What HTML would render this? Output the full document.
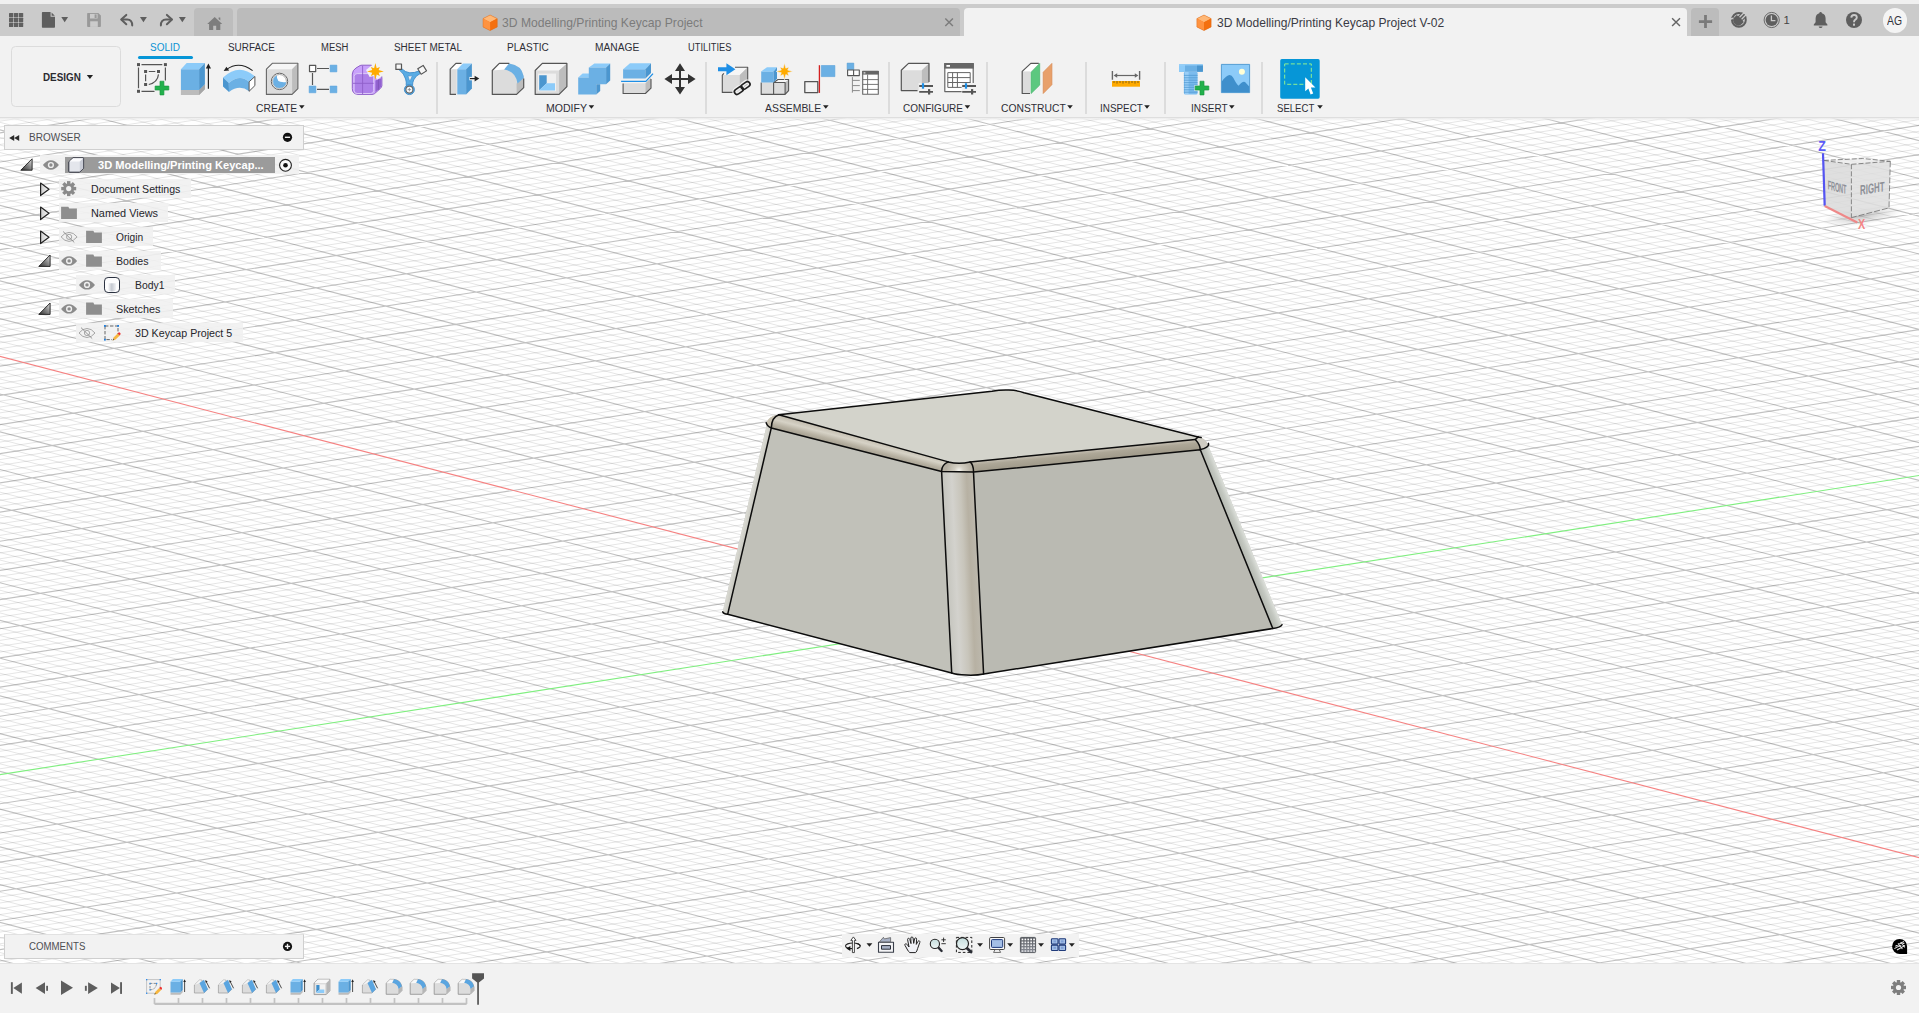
<!DOCTYPE html>
<html lang="en"><head><meta charset="utf-8"><title>Autodesk Fusion</title>
<style>
html,body{margin:0;padding:0}
body{width:1919px;height:1013px;overflow:hidden;position:relative;background:#f2f2f2;font-family:"Liberation Sans",sans-serif;}
#canvas{position:absolute;left:0;top:0}
.abs{position:absolute}
.t{position:absolute;white-space:nowrap;line-height:1;transform-origin:0 0;}
#topstrip{left:0;top:0;width:1919px;height:4px;background:#f0f0f0}
#tabbar{left:0;top:4px;width:1919px;height:32px;background:#cbcbcb}
#toolbar{left:0;top:36px;width:1919px;height:81px;background:#f2f2f2;border-bottom:1px solid #dedede}
.tab{position:absolute;top:8px;height:28px;border-radius:4px 4px 0 0}
#timeline{left:0;top:963px;width:1919px;height:50px;background:#f2f2f2;border-top:1px solid #e4e4e4;box-sizing:border-box}
#tbshadow{left:0;top:118px;width:1919px;height:3px;background:linear-gradient(#ececec,rgba(240,240,240,.0))}
.panel{position:absolute;background:#f2f2f2;border:1px solid #cfcfcf;box-sizing:border-box}
.rowbg{position:absolute;background:rgba(240,240,240,.88);height:20px}
.sep{position:absolute;top:62px;width:2px;height:52px;background:#dcdcdc}
#icons{position:absolute;left:0;top:0;pointer-events:none}

</style></head>
<body>
<svg id="canvas" width="1919" height="1013" viewBox="0 0 1919 1013">
<rect x="0" y="118" width="1919" height="845" fill="#fff"/>
<path d="M-2.0 121.5L33.4 116.0M-2.0 127.3L70.8 116.0M-2.0 139.0L145.6 116.0M-2.0 144.8L183.1 116.0M-2.0 150.7L220.5 116.0M-2.0 156.5L257.9 116.0M-2.0 168.2L332.8 116.0M-2.0 174.0L370.2 116.0M-2.0 179.9L407.6 116.0M-2.0 185.7L445.1 116.0M-2.0 197.4L519.9 116.0M-2.0 203.2L557.4 116.0M-2.0 209.0L594.8 116.0M-2.0 214.9L632.2 116.0M-2.0 226.5L707.1 116.0M-2.0 232.4L744.5 116.0M-2.0 238.2L781.9 116.0M-2.0 244.0L819.4 116.0M-2.0 255.7L894.2 116.0M-2.0 261.5L931.6 116.0M-2.0 267.4L969.1 116.0M-2.0 273.2L1006.5 116.0M-2.0 284.9L1081.4 116.0M-2.0 290.7L1118.8 116.0M-2.0 296.5L1156.2 116.0M-2.0 302.4L1193.6 116.0M-2.0 314.0L1268.5 116.0M-2.0 319.9L1305.9 116.0M-2.0 325.7L1343.4 116.0M-2.0 331.5L1380.8 116.0M-2.0 343.2L1455.6 116.0M-2.0 349.0L1493.1 116.0M-2.0 354.9L1530.5 116.0M-2.0 360.7L1567.9 116.0M-2.0 372.4L1642.8 116.0M-2.0 378.2L1680.2 116.0M-2.0 384.0L1717.6 116.0M-2.0 389.9L1755.1 116.0M-2.0 401.5L1829.9 116.0M-2.0 407.4L1867.4 116.0M-2.0 413.2L1904.8 116.0M-2.0 419.0L1921.0 119.3M-2.0 430.7L1921.0 131.0M-2.0 436.5L1921.0 136.8M-2.0 442.4L1921.0 142.6M-2.0 448.2L1921.0 148.5M-2.0 459.9L1921.0 160.1M-2.0 465.7L1921.0 166.0M-2.0 471.6L1921.0 171.8M-2.0 477.4L1921.0 177.6M-2.0 489.1L1921.0 189.3M-2.0 494.9L1921.0 195.1M-2.0 500.7L1921.0 201.0M-2.0 506.6L1921.0 206.8M-2.0 518.2L1921.0 218.5M-2.0 524.1L1921.0 224.3M-2.0 529.9L1921.0 230.2M-2.0 535.7L1921.0 236.0M-2.0 547.4L1921.0 247.7M-2.0 553.2L1921.0 253.5M-2.0 559.1L1921.0 259.3M-2.0 564.9L1921.0 265.2M-2.0 576.6L1921.0 276.8M-2.0 582.4L1921.0 282.7M-2.0 588.2L1921.0 288.5M-2.0 594.1L1921.0 294.3M-2.0 605.7L1921.0 306.0M-2.0 611.6L1921.0 311.8M-2.0 617.4L1921.0 317.7M-2.0 623.2L1921.0 323.5M-2.0 634.9L1921.0 335.2M-2.0 640.7L1921.0 341.0M-2.0 646.6L1921.0 346.8M-2.0 652.4L1921.0 352.7M-2.0 664.1L1921.0 364.3M-2.0 669.9L1921.0 370.2M-2.0 675.7L1921.0 376.0M-2.0 681.6L1921.0 381.8M-2.0 693.2L1921.0 393.5M-2.0 699.1L1921.0 399.3M-2.0 704.9L1921.0 405.2M-2.0 710.7L1921.0 411.0M-2.0 722.4L1921.0 422.7M-2.0 728.2L1921.0 428.5M-2.0 734.1L1921.0 434.3M-2.0 739.9L1921.0 440.2M-2.0 751.6L1921.0 451.8M-2.0 757.4L1921.0 457.7M-2.0 763.3L1921.0 463.5M-2.0 769.1L1921.0 469.3M-2.0 780.8L1921.0 481.0M-2.0 786.6L1921.0 486.8M-2.0 792.4L1921.0 492.7M-2.0 798.3L1921.0 498.5M-2.0 809.9L1921.0 510.2M-2.0 815.8L1921.0 516.0M-2.0 821.6L1921.0 521.9M-2.0 827.4L1921.0 527.7M-2.0 839.1L1921.0 539.4M-2.0 844.9L1921.0 545.2M-2.0 850.8L1921.0 551.0M-2.0 856.6L1921.0 556.9M-2.0 868.3L1921.0 568.5M-2.0 874.1L1921.0 574.4M-2.0 879.9L1921.0 580.2M-2.0 885.8L1921.0 586.0M-2.0 897.4L1921.0 597.7M-2.0 903.3L1921.0 603.5M-2.0 909.1L1921.0 609.4M-2.0 914.9L1921.0 615.2M-2.0 926.6L1921.0 626.9M-2.0 932.4L1921.0 632.7M-2.0 938.3L1921.0 638.5M-2.0 944.1L1921.0 644.4M-2.0 955.8L1921.0 656.0M-2.0 961.6L1921.0 661.9M13.7 965.0L1921.0 667.7M51.1 965.0L1921.0 673.5M125.9 965.0L1921.0 685.2M163.4 965.0L1921.0 691.0M200.8 965.0L1921.0 696.9M238.2 965.0L1921.0 702.7M313.1 965.0L1921.0 714.4M350.5 965.0L1921.0 720.2M387.9 965.0L1921.0 726.0M425.4 965.0L1921.0 731.9M500.2 965.0L1921.0 743.5M537.7 965.0L1921.0 749.4M575.1 965.0L1921.0 755.2M612.5 965.0L1921.0 761.0M687.4 965.0L1921.0 772.7M724.8 965.0L1921.0 778.5M762.2 965.0L1921.0 784.4M799.7 965.0L1921.0 790.2M874.5 965.0L1921.0 801.9M911.9 965.0L1921.0 807.7M949.4 965.0L1921.0 813.6M986.8 965.0L1921.0 819.4M1061.7 965.0L1921.0 831.1M1099.1 965.0L1921.0 836.9M1136.5 965.0L1921.0 842.7M1173.9 965.0L1921.0 848.6M1248.8 965.0L1921.0 860.2M1286.2 965.0L1921.0 866.1M1323.7 965.0L1921.0 871.9M1361.1 965.0L1921.0 877.7M1435.9 965.0L1921.0 889.4M1473.4 965.0L1921.0 895.2M1510.8 965.0L1921.0 901.1M1548.2 965.0L1921.0 906.9M1623.1 965.0L1921.0 918.6M1660.5 965.0L1921.0 924.4M1697.9 965.0L1921.0 930.2M1735.4 965.0L1921.0 936.1M1810.2 965.0L1921.0 947.7M1847.7 965.0L1921.0 953.6M1885.1 965.0L1921.0 959.4M-2.0 952.0L47.8 965.0M-2.0 944.4L76.7 965.0M-2.0 936.9L105.6 965.0M-2.0 929.3L134.5 965.0M-2.0 914.2L192.3 965.0M-2.0 906.7L221.2 965.0M-2.0 899.1L250.0 965.0M-2.0 891.6L278.9 965.0M-2.0 876.5L336.7 965.0M-2.0 869.0L365.6 965.0M-2.0 861.4L394.5 965.0M-2.0 853.9L423.4 965.0M-2.0 838.8L481.1 965.0M-2.0 831.2L510.0 965.0M-2.0 823.7L538.9 965.0M-2.0 816.1L567.8 965.0M-2.0 801.0L625.6 965.0M-2.0 793.5L654.4 965.0M-2.0 785.9L683.3 965.0M-2.0 778.4L712.2 965.0M-2.0 763.3L770.0 965.0M-2.0 755.8L798.9 965.0M-2.0 748.2L827.8 965.0M-2.0 740.7L856.6 965.0M-2.0 725.6L914.4 965.0M-2.0 718.0L943.3 965.0M-2.0 710.5L972.2 965.0M-2.0 702.9L1001.1 965.0M-2.0 687.8L1058.8 965.0M-2.0 680.3L1087.7 965.0M-2.0 672.7L1116.6 965.0M-2.0 665.2L1145.5 965.0M-2.0 650.1L1203.3 965.0M-2.0 642.6L1232.2 965.0M-2.0 635.0L1261.0 965.0M-2.0 627.5L1289.9 965.0M-2.0 612.4L1347.7 965.0M-2.0 604.8L1376.6 965.0M-2.0 597.3L1405.5 965.0M-2.0 589.7L1434.4 965.0M-2.0 574.6L1492.1 965.0M-2.0 567.1L1521.0 965.0M-2.0 559.5L1549.9 965.0M-2.0 552.0L1578.8 965.0M-2.0 536.9L1636.6 965.0M-2.0 529.4L1665.5 965.0M-2.0 521.8L1694.3 965.0M-2.0 514.3L1723.2 965.0M-2.0 499.2L1781.0 965.0M-2.0 491.6L1809.9 965.0M-2.0 484.1L1838.8 965.0M-2.0 476.5L1867.7 965.0M-2.0 461.4L1921.0 963.8M-2.0 453.9L1921.0 956.3M-2.0 446.3L1921.0 948.8M-2.0 438.8L1921.0 941.2M-2.0 423.7L1921.0 926.1M-2.0 416.2L1921.0 918.6M-2.0 408.6L1921.0 911.0M-2.0 401.1L1921.0 903.5M-2.0 386.0L1921.0 888.4M-2.0 378.4L1921.0 880.8M-2.0 370.9L1921.0 873.3M-2.0 363.3L1921.0 865.7M-2.0 348.2L1921.0 850.6M-2.0 340.7L1921.0 843.1M-2.0 333.1L1921.0 835.5M-2.0 325.6L1921.0 828.0M-2.0 310.5L1921.0 812.9M-2.0 303.0L1921.0 805.4M-2.0 295.4L1921.0 797.8M-2.0 287.9L1921.0 790.3M-2.0 272.8L1921.0 775.2M-2.0 265.2L1921.0 767.6M-2.0 257.7L1921.0 760.1M-2.0 250.1L1921.0 752.5M-2.0 235.0L1921.0 737.4M-2.0 227.5L1921.0 729.9M-2.0 219.9L1921.0 722.3M-2.0 212.4L1921.0 714.8M-2.0 197.3L1921.0 699.7M-2.0 189.8L1921.0 692.2M-2.0 182.2L1921.0 684.6M-2.0 174.7L1921.0 677.1M-2.0 159.6L1921.0 662.0M-2.0 152.0L1921.0 654.4M-2.0 144.5L1921.0 646.9M-2.0 136.9L1921.0 639.3M-2.0 121.8L1921.0 624.2M4.5 116.0L1921.0 616.7M33.4 116.0L1921.0 609.1M62.3 116.0L1921.0 601.6M120.1 116.0L1921.0 586.5M149.0 116.0L1921.0 579.0M177.9 116.0L1921.0 571.4M206.7 116.0L1921.0 563.9M264.5 116.0L1921.0 548.8M293.4 116.0L1921.0 541.2M322.3 116.0L1921.0 533.7M351.2 116.0L1921.0 526.1M408.9 116.0L1921.0 511.0M437.8 116.0L1921.0 503.5M466.7 116.0L1921.0 495.9M495.6 116.0L1921.0 488.4M553.4 116.0L1921.0 473.3M582.3 116.0L1921.0 465.8M611.2 116.0L1921.0 458.2M640.0 116.0L1921.0 450.7M697.8 116.0L1921.0 435.6M726.7 116.0L1921.0 428.0M755.6 116.0L1921.0 420.5M784.5 116.0L1921.0 412.9M842.2 116.0L1921.0 397.8M871.1 116.0L1921.0 390.3M900.0 116.0L1921.0 382.7M928.9 116.0L1921.0 375.2M986.7 116.0L1921.0 360.1M1015.6 116.0L1921.0 352.6M1044.4 116.0L1921.0 345.0M1073.3 116.0L1921.0 337.5M1131.1 116.0L1921.0 322.4M1160.0 116.0L1921.0 314.8M1188.9 116.0L1921.0 307.3M1217.8 116.0L1921.0 299.7M1275.5 116.0L1921.0 284.6M1304.4 116.0L1921.0 277.1M1333.3 116.0L1921.0 269.5M1362.2 116.0L1921.0 262.0M1420.0 116.0L1921.0 246.9M1448.8 116.0L1921.0 239.4M1477.7 116.0L1921.0 231.8M1506.6 116.0L1921.0 224.3M1564.4 116.0L1921.0 209.2M1593.3 116.0L1921.0 201.6M1622.2 116.0L1921.0 194.1M1651.0 116.0L1921.0 186.5M1708.8 116.0L1921.0 171.4M1737.7 116.0L1921.0 163.9M1766.6 116.0L1921.0 156.3M1795.5 116.0L1921.0 148.8M1853.2 116.0L1921.0 133.7M1882.1 116.0L1921.0 126.2M1911.0 116.0L1921.0 118.6" stroke="#000" stroke-opacity="0.1" stroke-width="1" fill="none"/><path d="M-2.0 133.2L108.2 116.0M-2.0 162.3L295.4 116.0M-2.0 191.5L482.5 116.0M-2.0 220.7L669.6 116.0M-2.0 249.9L856.8 116.0M-2.0 279.0L1043.9 116.0M-2.0 308.2L1231.1 116.0M-2.0 337.4L1418.2 116.0M-2.0 366.5L1605.4 116.0M-2.0 395.7L1792.5 116.0M-2.0 424.9L1921.0 125.1M-2.0 454.0L1921.0 154.3M-2.0 483.2L1921.0 183.5M-2.0 512.4L1921.0 212.7M-2.0 541.6L1921.0 241.8M-2.0 570.7L1921.0 271.0M-2.0 599.9L1921.0 300.2M-2.0 629.1L1921.0 329.3M-2.0 658.2L1921.0 358.5M-2.0 687.4L1921.0 387.7M-2.0 716.6L1921.0 416.8M-2.0 745.7L1921.0 446.0M-2.0 804.1L1921.0 504.4M-2.0 833.3L1921.0 533.5M-2.0 862.4L1921.0 562.7M-2.0 891.6L1921.0 591.9M-2.0 920.8L1921.0 621.0M-2.0 949.9L1921.0 650.2M88.5 965.0L1921.0 679.4M275.7 965.0L1921.0 708.5M462.8 965.0L1921.0 737.7M649.9 965.0L1921.0 766.9M837.1 965.0L1921.0 796.1M1024.2 965.0L1921.0 825.2M1211.4 965.0L1921.0 854.4M1398.5 965.0L1921.0 883.6M1585.7 965.0L1921.0 912.7M1772.8 965.0L1921.0 941.9M-2.0 959.5L19.0 965.0M-2.0 921.8L163.4 965.0M-2.0 884.1L307.8 965.0M-2.0 846.3L452.2 965.0M-2.0 808.6L596.7 965.0M-2.0 770.9L741.1 965.0M-2.0 733.1L885.5 965.0M-2.0 695.4L1030.0 965.0M-2.0 657.7L1174.4 965.0M-2.0 619.9L1318.8 965.0M-2.0 582.2L1463.3 965.0M-2.0 544.5L1607.7 965.0M-2.0 506.7L1752.1 965.0M-2.0 469.0L1896.5 965.0M-2.0 431.3L1921.0 933.7M-2.0 393.5L1921.0 895.9M-2.0 318.1L1921.0 820.5M-2.0 280.3L1921.0 782.7M-2.0 242.6L1921.0 745.0M-2.0 204.8L1921.0 707.3M-2.0 167.1L1921.0 669.5M-2.0 129.4L1921.0 631.8M91.2 116.0L1921.0 594.1M235.6 116.0L1921.0 556.3M380.1 116.0L1921.0 518.6M524.5 116.0L1921.0 480.9M668.9 116.0L1921.0 443.1M813.4 116.0L1921.0 405.4M957.8 116.0L1921.0 367.7M1102.2 116.0L1921.0 329.9M1246.6 116.0L1921.0 292.2M1391.1 116.0L1921.0 254.5M1535.5 116.0L1921.0 216.7M1679.9 116.0L1921.0 179.0M1824.4 116.0L1921.0 141.2" stroke="#000" stroke-opacity="0.245" stroke-width="1.15" fill="none"/><path d="M-2.0 355.8L1921.0 858.2" stroke="#f58282" stroke-width="1.1" fill="none"/><path d="M-2.0 774.9L1921.0 475.2" stroke="#80ee80" stroke-width="1.1" fill="none"/>

<defs>
<linearGradient id="gBandL" gradientUnits="userSpaceOnUse" x1="860" y1="437" x2="856.6" y2="450">
 <stop offset="0" stop-color="#c4beb0"/><stop offset="0.35" stop-color="#d6d2c6"/><stop offset="0.7" stop-color="#b8b2a3"/><stop offset="1" stop-color="#a49e8f"/>
</linearGradient>
<linearGradient id="gBandR" gradientUnits="userSpaceOnUse" x1="1085" y1="451" x2="1086.1" y2="462">
 <stop offset="0" stop-color="#c2bcaf"/><stop offset="0.3" stop-color="#ada797"/><stop offset="1" stop-color="#9d9787"/>
</linearGradient>
<linearGradient id="gFront" gradientUnits="userSpaceOnUse" x1="946" y1="570" x2="979" y2="568.5">
 <stop offset="0" stop-color="#c4c4bd"/><stop offset="0.3" stop-color="#d3d2cd"/><stop offset="0.55" stop-color="#c8c5bb"/><stop offset="0.75" stop-color="#b7b1a3"/><stop offset="1" stop-color="#bdb9ae"/>
</linearGradient>
<linearGradient id="gSilL" gradientUnits="userSpaceOnUse" x1="745" y1="520" x2="750" y2="521.2">
 <stop offset="0" stop-color="#d9d9d2"/><stop offset="1" stop-color="#c6c6be"/>
</linearGradient>
<linearGradient id="gSilR" gradientUnits="userSpaceOnUse" x1="1233" y1="530" x2="1242" y2="526.3">
 <stop offset="0" stop-color="#b4b8b0"/><stop offset="0.5" stop-color="#c4c8c1"/><stop offset="1" stop-color="#dfe2dd"/>
</linearGradient>
<radialGradient id="gCorner" gradientUnits="userSpaceOnUse" cx="959" cy="470.6" r="13">
 <stop offset="0" stop-color="#f6f5f0"/><stop offset="0.35" stop-color="#d2cec2"/><stop offset="1" stop-color="#b3ad9f"/>
</radialGradient>
</defs>
<g stroke-linejoin="round" stroke-linecap="round">
<!-- silhouette fill (everything) -->
<path d="M778.8 414.8 C772 415.5 767.5 419 767.1 423.7 L722.7 611.9 C723.5 613.5 725.5 614.2 727.7 614.2 L951.7 673 C957 675.2 975 676 983.6 674 L1272.8 628.5 C1277 628 1281 627 1282 624.8 L1208.2 445.5 C1207 441 1203 438 1198.1 437.1 L1024 392.8 C1016 389.4 1002 389.2 992 391.3 Z" fill="#c1c1b9"/>
<!-- left silhouette strip -->
<path d="M778.8 414.8 C772 415.5 767.5 419 767.1 423.7 L722.7 611.9 C723.5 613.5 725.5 614.2 727.7 614.2 L771.3 427.9 C771.5 421 774 416.5 778.8 414.8 Z" fill="url(#gSilL)"/>
<path d="M778.8 414.8 C772 415.5 767.5 419 766.3 423 C767.2 426 769 427.2 771.3 427.8 C771.5 421 774 416.5 778.8 414.8 Z" fill="#c9c2b1"/>
<!-- left face -->
<path d="M771.3 427.9 L941.6 471.5 L951.7 673 L727.7 614.2 Z" fill="#c1c1b9"/>
<!-- right face -->
<path d="M973.5 472.1 L1200.3 449.7 L1272.8 628.5 L983.6 674 Z" fill="#babab2"/>
<!-- right silhouette strip -->
<path d="M1200.3 449.7 L1208.2 445.5 L1282 624.8 C1281 627 1277 628 1272.8 628.5 Z" fill="url(#gSilR)"/>
<!-- front vertical fillet -->
<path d="M941.6 471.5 L973.5 472.1 L983.6 674 C975 676 957 675.2 951.7 673 Z" fill="url(#gFront)"/>
<!-- fillet band left -->
<path d="M778.8 414.8 L948.3 461.9 C943.5 464 941.5 467.5 941.6 471.5 L771.3 427.9 C771.5 421 774 416.5 778.8 414.8 Z" fill="url(#gBandL)"/>
<!-- fillet band right -->
<path d="M970.1 461.9 L1195.3 439.5 C1198.5 443 1200.3 446 1200.3 449.7 L973.5 472.1 C973.6 467.5 972.8 464.3 970.1 461.9 Z" fill="url(#gBandR)"/>
<!-- right corner patch -->
<path d="M1198.1 437.1 C1203 438 1207 441 1208.2 445.5 C1207 448.5 1204 450 1200.3 449.7 C1200.3 446 1198.5 443 1195.3 439.5 Z" fill="#cfccc2"/>
<!-- front corner patch -->
<path d="M948.3 461.9 C954 463.3 964 463.3 970.1 461.9 C972.8 464.3 973.6 467.5 973.5 472.1 L941.6 471.5 C941.5 467.5 943.5 464 948.3 461.9 Z" fill="url(#gCorner)"/>
<!-- top face -->
<path d="M778.8 414.8 L992 391.3 C1002 389.2 1016 389.4 1024 392.8 L1198.1 437.1 L1195.3 439.5 L970.1 461.9 C964 463.3 954 463.3 948.3 461.9 Z" fill="#d3d3cb"/>
<!-- edges -->
<g fill="none" stroke="#0c0c0c" stroke-width="1.5">
<path d="M778.8 414.8 L992 391.3 C1002 389.2 1016 389.4 1024 392.8 L1198.1 437.1"/>
<path d="M1198.1 437.1 L1201.2 437.6"/><path d="M1208.4 443.4 C1209.6 446 1205.4 448.8 1200.3 449.6"/>
<path d="M1198.1 437.1 C1196.5 438 1195.8 439.2 1195.3 439.5 C1198.5 443 1200.3 446 1200.3 449.7"/>
<path d="M1195.3 439.5 L970.1 461.9 C964 463.3 954 463.3 948.3 461.9 L778.8 414.8"/>
<path d="M766.2 422.8 C767.2 426 769 427.2 771.3 427.8"/>
<path d="M778.8 414.8 C774 416.5 771.5 421 771.3 427.9 L727.7 614.2"/>
<path d="M771.3 427.9 L941.6 471.5 L973.5 472.1 L1200.3 449.7 L1272.8 628.5"/>
<path d="M948.3 461.9 C943.5 464 941.5 467.5 941.6 471.5 L951.7 673"/>
<path d="M970.1 461.9 C972.8 464.3 973.6 467.5 973.5 472.1 L983.6 674"/>
<path d="M722.7 611.9 C723.5 613.5 725.5 614.2 727.7 614.2 L951.7 673 C957 675.2 975 676 983.6 674 L1272.8 628.5 C1277 628 1281 627 1282 624.8"/>
</g>
</g>


<defs>
<radialGradient id="gShadow" cx="0.5" cy="0.5" r="0.5"><stop offset="0" stop-color="#000" stop-opacity="0.22"/><stop offset="1" stop-color="#000" stop-opacity="0"/></radialGradient>
</defs>
<g>
<ellipse cx="1862" cy="216" rx="40" ry="9" fill="url(#gShadow)" transform="rotate(-8 1862 216)"/>
<path d="M1823.8 160.4 L1851.4 164.3 L1851.4 217.6 L1824.2 206 Z" fill="#d9d9d9" fill-opacity="0.85"/>
<path d="M1851.4 164.3 L1890.3 161.3 L1889 207.9 L1851.4 217.6 Z" fill="#dedede" fill-opacity="0.85"/>
<path d="M1823.8 160.4 L1862.7 158.5 L1890.3 161.3 L1851.4 164.3 Z" fill="#ececec" fill-opacity="0.9"/>
<g fill="none" stroke="#6e6e6e" stroke-width="0.8">
<path d="M1823.8 160.4 L1851.4 164.3 L1890.3 161.3 M1851.4 164.3 L1851.4 217.6" stroke-dasharray="5 2"/>
<path d="M1823.8 160.4 L1862.7 158.5 L1890.3 161.3" stroke-dasharray="5 2"/>
<path d="M1890.3 161.3 L1889 207.9 L1851.4 217.6" stroke-dasharray="6 2"/>
</g>
<text transform="matrix(0.685 0.178 0 1.58 1827.7 189.3)" font-family="Liberation Sans, sans-serif" font-size="8.2" font-weight="bold" fill="#8d9097" letter-spacing="-0.2">FRONT</text>
<text transform="matrix(0.957 -0.153 0 1.7 1859.9 195.1)" font-family="Liberation Sans, sans-serif" font-size="8.2" font-weight="bold" fill="#8d9097" letter-spacing="0.1">RIGHT</text>
<path d="M1823 153.3 L1824.7 205.8" stroke="#5454f2" stroke-width="2.2" fill="none"/>
<path d="M1824.7 206.1 L1857.3 222.4" stroke="#ee8888" stroke-width="2.2" fill="none"/>
<text transform="translate(1818.2 150.8) scale(0.83 1)" font-family="Liberation Sans, sans-serif" font-size="15" font-weight="bold" fill="#5c5cf6">Z</text>
<text transform="translate(1858.1 229.3) scale(0.72 1)" font-family="Liberation Sans, sans-serif" font-size="15" font-weight="bold" fill="#f58585">X</text>
</g>

</svg>
<div class="abs" id="topstrip"></div><div class="abs" id="tabbar"></div><div class="abs" id="toolbar"></div><div class="abs" id="tbshadow"></div>
<div class="tab" style="left:194px;width:39px;background:#bdbdbd"></div>
<div class="tab" style="left:237px;width:723px;background:#bbbbbb"></div>
<div class="tab" style="left:964px;width:723px;background:#f2f2f2;height:29px"></div>
<div class="tab" style="left:1691px;width:28px;background:#bcbcbc"></div>
<div class="t" style="left:502.30px;top:17.46px;font-size:12.8px;color:#7b7b7b;transform:scaleX(0.9494)">3D Modelling/Printing Keycap Project</div>
<div class="t" style="left:1216.50px;top:17.46px;font-size:12.8px;color:#3a3a44;transform:scaleX(0.9424)">3D Modelling/Printing Keycap Project V-02</div>
<div class="t" style="left:1783.40px;top:14.73px;font-size:11.3px;color:#444;">1</div>
<div class="abs" style="left:1882.5px;top:8px;width:24.6px;height:24.6px;border-radius:50%;background:#f4f4f4"></div>
<div class="t" style="left:1887.00px;top:14.89px;font-size:12.3px;color:#33333b;transform:scaleX(0.8440)">AG</div>
<div class="t" style="left:150.30px;top:41.39px;font-size:11.7px;color:#0a92d4;transform:scaleX(0.8516)">SOLID</div>
<div class="t" style="left:228.10px;top:41.39px;font-size:11.7px;color:#2e2e36;transform:scaleX(0.8487)">SURFACE</div>
<div class="t" style="left:321.20px;top:41.39px;font-size:11.7px;color:#2e2e36;transform:scaleX(0.8106)">MESH</div>
<div class="t" style="left:394.00px;top:41.39px;font-size:11.7px;color:#2e2e36;transform:scaleX(0.8480)">SHEET METAL</div>
<div class="t" style="left:507.10px;top:41.39px;font-size:11.7px;color:#2e2e36;transform:scaleX(0.8592)">PLASTIC</div>
<div class="t" style="left:595.40px;top:41.39px;font-size:11.7px;color:#2e2e36;transform:scaleX(0.8736)">MANAGE</div>
<div class="t" style="left:688.30px;top:41.39px;font-size:11.7px;color:#2e2e36;transform:scaleX(0.7948)">UTILITIES</div>
<div class="abs" style="left:138.2px;top:56.2px;width:54.4px;height:3.3px;border-radius:1.6px;background:#0696d7"></div>
<div class="abs" style="left:11.4px;top:46.1px;width:110.1px;height:61.4px;box-sizing:border-box;border:1.4px solid #dcdcdc;border-radius:4.5px"></div>
<div class="t" style="left:43.10px;top:71.39px;font-size:11.7px;color:#2a2a30;font-weight:bold;transform:scaleX(0.8426)">DESIGN</div>
<div class="t" style="left:256.20px;top:102.56px;font-size:11.5px;color:#2e2e36;transform:scaleX(0.8975)">CREATE</div>
<div class="t" style="left:546.00px;top:102.56px;font-size:11.5px;color:#2e2e36;transform:scaleX(0.9168)">MODIFY</div>
<div class="t" style="left:765.20px;top:102.56px;font-size:11.5px;color:#2e2e36;transform:scaleX(0.9048)">ASSEMBLE</div>
<div class="t" style="left:903.20px;top:102.56px;font-size:11.5px;color:#2e2e36;transform:scaleX(0.8696)">CONFIGURE</div>
<div class="t" style="left:1001.30px;top:102.56px;font-size:11.5px;color:#2e2e36;transform:scaleX(0.8963)">CONSTRUCT</div>
<div class="t" style="left:1100.00px;top:102.56px;font-size:11.5px;color:#2e2e36;transform:scaleX(0.8587)">INSPECT</div>
<div class="t" style="left:1191.00px;top:102.56px;font-size:11.5px;color:#2e2e36;transform:scaleX(0.8722)">INSERT</div>
<div class="t" style="left:1276.50px;top:102.56px;font-size:11.5px;color:#2e2e36;transform:scaleX(0.8338)">SELECT</div>
<div class="sep" style="left:436px"></div>
<div class="sep" style="left:705px"></div>
<div class="sep" style="left:888px"></div>
<div class="sep" style="left:986px"></div>
<div class="sep" style="left:1085px"></div>
<div class="sep" style="left:1164px"></div>
<div class="sep" style="left:1261px"></div>
<div class="panel" style="left:4px;top:125px;width:300px;height:24.6px"></div>
<div class="t" style="left:29.20px;top:131.73px;font-size:11.3px;color:#4e4e52;transform:scaleX(0.8872)">BROWSER</div>
<div class="rowbg" style="left:40.4px;top:155.2px;width:258.9px;height:19.3px"></div>
<div class="rowbg" style="left:58.6px;top:179.2px;width:132.9px;height:19.3px"></div>
<div class="t" style="left:91.30px;top:183.56px;font-size:11.5px;color:#26262c;transform:scaleX(0.9191)">Document Settings</div>
<div class="rowbg" style="left:58.6px;top:203.2px;width:109.0px;height:19.3px"></div>
<div class="t" style="left:91.30px;top:207.56px;font-size:11.5px;color:#26262c;transform:scaleX(0.9472)">Named Views</div>
<div class="rowbg" style="left:58.6px;top:227.2px;width:94.0px;height:19.3px"></div>
<div class="t" style="left:116.30px;top:231.56px;font-size:11.5px;color:#26262c;transform:scaleX(0.8867)">Origin</div>
<div class="rowbg" style="left:58.6px;top:251.2px;width:102.2px;height:19.3px"></div>
<div class="t" style="left:116.30px;top:255.56px;font-size:11.5px;color:#26262c;transform:scaleX(0.9243)">Bodies</div>
<div class="rowbg" style="left:76.1px;top:275.2px;width:98.8px;height:19.3px"></div>
<div class="t" style="left:134.50px;top:279.56px;font-size:11.5px;color:#26262c;transform:scaleX(0.9047)">Body1</div>
<div class="rowbg" style="left:58.6px;top:299.2px;width:114.0px;height:19.3px"></div>
<div class="t" style="left:116.30px;top:303.56px;font-size:11.5px;color:#26262c;transform:scaleX(0.9366)">Sketches</div>
<div class="rowbg" style="left:76.1px;top:323.2px;width:166.5px;height:19.3px"></div>
<div class="t" style="left:134.50px;top:327.56px;font-size:11.5px;color:#26262c;transform:scaleX(0.9273)">3D Keycap Project 5</div>
<div class="abs" style="left:65.2px;top:157px;width:209.6px;height:15.7px;background:#9b9b9b"></div>
<div class="t" style="left:98.10px;top:159.39px;font-size:11.7px;color:#ffffff;font-weight:bold;transform:scaleX(0.9482)">3D Modelling/Printing Keycap...</div>
<div class="panel" style="left:4px;top:934px;width:300px;height:24.6px;border-top-color:#e2e2e2"></div>
<div class="t" style="left:29.30px;top:940.73px;font-size:11.3px;color:#4e4e52;transform:scaleX(0.8557)">COMMENTS</div>
<div class="abs" style="left:842px;top:934px;width:236.7px;height:23px;background:#f2f2f2"></div>
<div class="abs" id="timeline"></div>
<svg id="icons" width="1919" height="1013" viewBox="0 0 1919 1013"><!-- app grid -->
<g fill="#606060">
<rect x="9" y="12.9" width="4.3" height="4.3" rx=".5"/><rect x="13.95" y="12.9" width="4.3" height="4.3" rx=".5"/><rect x="18.9" y="12.9" width="4.3" height="4.3" rx=".5"/>
<rect x="9" y="17.85" width="4.3" height="4.3" rx=".5"/><rect x="13.95" y="17.85" width="4.3" height="4.3" rx=".5"/><rect x="18.9" y="17.85" width="4.3" height="4.3" rx=".5"/>
<rect x="9" y="22.8" width="4.3" height="4.3" rx=".5"/><rect x="13.95" y="22.8" width="4.3" height="4.3" rx=".5"/><rect x="18.9" y="22.8" width="4.3" height="4.3" rx=".5"/>
</g>
<!-- file -->
<path d="M42.6 12.1 H50.6 V16.7 H55 V27 Q55 27.8 54.2 27.8 H42.6 Q41.9 27.8 41.9 27 V12.9 Q41.9 12.1 42.6 12.1 Z M51.6 12.4 L54.8 15.7 H51.6 Z" fill="#5e5e5e"/>
<path d="M61.3 17 H68.1 L64.7 22.3 Z" fill="#5e5e5e"/>
<!-- save (disabled) -->
<path d="M88 12.9 H98.3 L100.9 15.5 V26 Q100.9 26.9 100 26.9 H88 Q87.1 26.9 87.1 26 V13.8 Q87.1 12.9 88 12.9 Z" fill="#999"/>
<rect x="90" y="13.9" width="7.6" height="4.6" fill="#cbcbcb"/><rect x="94.6" y="14.4" width="2" height="3.6" fill="#999"/>
<rect x="90.2" y="21.3" width="7.6" height="5.6" fill="#cbcbcb"/><rect x="91.4" y="22.5" width="5.2" height="4.4" fill="#999" opacity=".0"/>
<!-- undo -->
<g fill="none" stroke="#5e5e5e" stroke-width="2" stroke-linecap="round" stroke-linejoin="round">
<path d="M126.3 14.9 L121.2 19.6 L126.3 24.3"/><path d="M121.8 19.6 H127.2 C130.6 19.6 132.3 22 132.2 25.4"/>
<path d="M166.9 14.9 L172 19.6 L166.9 24.3"/><path d="M171.4 19.6 H166 C162.6 19.6 160.7 22 160.9 25.4"/>
</g>
<path d="M140 17 H146.9 L143.45 22.3 Z" fill="#5e5e5e"/>
<path d="M178.9 17 H185.8 L182.35 22.3 Z" fill="#5e5e5e"/>
<!-- home -->
<path d="M214.7 16.9 L222.2 24 H220.3 V30 H216.2 V25.8 H213.2 V30 H209.1 V24 H207.2 Z M218.6 17.6 H220.3 V20.4 L218.6 18.9 Z" fill="#7d7d7d"/>
<!-- cubes -->
<g id="ocube">
<path d="M490.1 15 L497.2 18.6 V27 L490.1 30.6 L483 27 V18.6 Z" fill="#f47a1f"/>
<path d="M490.1 15 L497.2 18.6 L490.1 22.3 L483 18.6 Z" fill="#ffb877"/>
<path d="M490.1 22.3 L497.2 18.6 V27 L490.1 30.6 Z" fill="#f4700f"/>
<path d="M490.1 22.3 L483 18.6 V27 L490.1 30.6 Z" fill="#ff9340"/>
<path d="M490.1 15 L497.2 18.6 V27 L490.1 30.6 L483 27 V18.6 Z" fill="none" stroke="#d86a1a" stroke-width=".6" opacity=".7"/>
</g>
<use href="#ocube" x="713.9" y="0"/>
<!-- close X -->
<path d="M945.3 18.4 L952.9 26 M952.9 18.4 L945.3 26" stroke="#7c7c7c" stroke-width="1.45" fill="none"/>
<path d="M1672.1 18.3 L1680 26.1 M1680 18.3 L1672.1 26.1" stroke="#666" stroke-width="1.45" fill="none"/>
<!-- plus -->
<path d="M1705.5 15 V28 M1698.9 21.6 H1712.1" stroke="#7a7a7a" stroke-width="2.8" fill="none"/>
<!-- extensions -->
<g>
<circle cx="1738.9" cy="19.9" r="6.9" fill="none" stroke="#5e5e5e" stroke-width="2"/>
<g transform="translate(1738.9 19.9) rotate(45)">
<rect x="-3.2" y="-7.6" width="6.4" height="8" fill="#5e5e5e"/>
<path d="M-5 -2 H5 V1.2 Q5 5.6 0 5.8 Q-5 5.6 -5 1.2 Z" fill="#5e5e5e"/>
<rect x="-2.1" y="-9" width="1.3" height="6.6" fill="#cbcbcb"/><rect x="0.8" y="-9" width="1.3" height="6.6" fill="#cbcbcb"/>
<rect x="-4.4" y="5" width="1.6" height="4" fill="#cbcbcb" transform="rotate(25)"/>
</g>
</g>
<!-- job status clock -->
<circle cx="1771.7" cy="20" r="7.6" fill="none" stroke="#5e5e5e" stroke-width=".9"/>
<circle cx="1771.7" cy="20" r="6.1" fill="#5e5e5e"/>
<path d="M1771.4 15.6 V20.6 H1775.4" stroke="#cbcbcb" stroke-width="1.3" fill="none"/>
<!-- bell -->
<path d="M1820.6 11.9 Q1821.8 11.9 1821.9 13.2 Q1825.6 14.2 1825.6 18.6 V22.2 L1827.4 24.6 V25.4 H1813.8 V24.6 L1815.6 22.2 V18.6 Q1815.6 14.2 1819.3 13.2 Q1819.4 11.9 1820.6 11.9 Z" fill="#5e5e5e"/>
<path d="M1818.6 26.4 H1822.6 Q1822.3 28 1820.6 28 Q1818.9 28 1818.6 26.4 Z" fill="#5e5e5e"/>
<!-- help -->
<circle cx="1854" cy="20" r="8" fill="#5e5e5e"/>
<path d="M1851.3 17.6 Q1851.4 15 1854 15 Q1856.8 15 1856.8 17.4 Q1856.8 18.8 1855.2 19.8 Q1854 20.6 1854 22.2" stroke="#cbcbcb" stroke-width="1.9" fill="none"/>
<rect x="1853" y="23.6" width="2" height="2.1" fill="#cbcbcb"/>
<g stroke-linejoin="round">
<!-- ===== Create Sketch ===== -->
<g fill="none" stroke="#555" stroke-width="1.2">
<path d="M141.5 64.6 H162.3 M138.5 67.6 V88.2 M165.4 67.6 V80.5 M141.5 91.3 H154.5"/>
<path d="M148.8 71.5 H155.3 M145.6 74.6 V81.3" />
<path d="M158.5 74.4 Q157.6 82.6 148.8 84.5"/>
</g>
<g fill="#555">
<rect x="137" y="63.1" width="3" height="3"/><rect x="163.9" y="63.1" width="3" height="3"/><rect x="137" y="89.8" width="3" height="3"/>
<rect x="144.1" y="70" width="3" height="3"/><rect x="157" y="70" width="3" height="3"/><rect x="144.1" y="83" width="3" height="3"/>
</g>
<path d="M160 81.2 H163.9 V86.1 H168.8 V90 H163.9 V94.9 H160 V90 H155.1 V86.1 H160 Z" fill="#22b14c" stroke="#1a9a40" stroke-width=".7"/>
<!-- ===== Extrude ===== -->
<path d="M180.9 90 H199.1 L204.9 84.2 V89.2 L199.1 94.9 H180.9 Z" fill="#bcbcbc"/>
<path d="M199.1 90 L204.9 84.2 V89.2 L199.1 94.9 Z" fill="#a6a6a6"/>
<rect x="180.9" y="69.2" width="18.2" height="20.8" fill="#6bb0e4"/>
<path d="M180.9 69.2 L186.7 63.1 H204.9 L199.1 69.2 Z" fill="#8ccbf9"/>
<path d="M199.1 69.2 L204.9 63.1 V84.2 L199.1 90 Z" fill="#4b96cf"/>
<path d="M208.4 66 V88.7" stroke="#222" stroke-width="1.2" fill="none"/>
<path d="M208.4 63.6 L211 68.6 H205.8 Z" fill="#222"/>
<!-- ===== Revolve ===== -->
<path d="M223 77.6 Q239 62.6 254.9 76.3 L249.1 81.8 Q239.8 73.5 228.8 83 Z" fill="#8ccbf9"/>
<path d="M228.8 83 Q239.8 73.5 249.1 81.8 V91.3 Q239.6 84 229 92 Z" fill="#6bb0e4"/>
<path d="M223 77.6 L228.8 83 L229 92 L223 86.5 Z" fill="#4b96cf"/>
<path d="M249.1 81.8 L254.9 76.5 V85.6 L249.1 91.3 Z" fill="#fff" stroke="#555" stroke-width="1"/>
<path d="M252.6 70.6 Q239 60.6 226.6 69.4" stroke="#222" stroke-width="1.1" fill="none"/>
<path d="M223.7 71 L226.4 66.8 L229.2 70.6 Z" fill="#222"/>
<!-- ===== Hole ===== -->
<path d="M266.4 69.2 L272.3 63.3 H297.9 V88.6 L292.1 94.4 H266.4 Z" fill="#dcdcdc"/>
<path d="M266.4 69.2 L272.3 63.3 H297.9 L292.1 69.2 Z" fill="#f6f6f6"/>
<path d="M292.1 69.2 L297.9 63.3 V88.6 L292.1 94.4 Z" fill="#bdbdbd"/>
<path d="M266.4 69.2 L272.3 63.3 H297.9 V88.6 L292.1 94.4 H266.4 Z" fill="none" stroke="#666" stroke-width="1.1"/>
<circle cx="279.5" cy="81.4" r="8.2" fill="#fff" stroke="#666" stroke-width="1"/>
<circle cx="279.5" cy="81.4" r="6.9" fill="none" stroke="#8a8a8a" stroke-width=".7"/><path d="M276.9 75.6 Q276 83.4 286.2 82.2 Q285.2 88 279.3 87.9 Q273.2 87.4 273.1 81.4 Q273.2 77.4 276.9 75.6 Z" fill="#6bb0e4"/>
<path d="M277.8 74.4 Q276.8 82 286.6 81.2" fill="none" stroke="#4b96cf" stroke-width="0"/>
<!-- ===== Rect Pattern ===== -->
<g stroke="#555" stroke-width="1.2" fill="none"><path d="M317 68.5 H329 M312.5 73 V85 M317 89.4 H329"/></g>
<rect x="309.5" y="65.4" width="6.2" height="6.2" fill="#fff" stroke="#555" stroke-width="1.2"/>
<rect x="330.1" y="65.1" width="6.8" height="6.8" fill="#6bb0e4" stroke="#5aa3dc" stroke-width=".5"/>
<rect x="309.1" y="86" width="6.8" height="6.8" fill="#6bb0e4" stroke="#5aa3dc" stroke-width=".5"/>
<rect x="330.1" y="86" width="6.8" height="6.8" fill="#6bb0e4" stroke="#5aa3dc" stroke-width=".5"/>
<!-- ===== Create Form ===== -->
<path d="M352.3 74 Q352.6 70 356 68 L360 65.6 Q360.8 65.2 362 65.2 H371 Q381.9 67 381.9 78 V85.8 Q381.6 87.4 380 88.8 L374.6 93.6 Q373.6 94.4 372 94.4 H358 Q352.3 94 352.3 88.6 Z" fill="#c9a2fb" stroke="#8f60c8" stroke-width="1"/>
<path d="M375.4 80.4 L381.4 78.2 V85.6 Q381.2 87 380 88.2 L375.4 92 Z" fill="#9262d0"/>
<rect x="354.1" y="73.6" width="19.6" height="19.9" rx="3" fill="#ad80e8" stroke="#dcc8f8" stroke-width="1"/>
<path d="M362.6 65.8 V94 M353 83.3 H373.6" stroke="#8f60c8" stroke-width=".9" fill="none"/>
<path d="M378.4 79.4 V90" stroke="#7f52b8" stroke-width=".8" fill="none"/>
<path d="M366 70 L376 62 L385 74 L377.5 79.5 L374 76 L369.6 77 Z" fill="#f2f2f2"/>
<path d="M375.4 63.0 L376.7 68.2 L379.9 66.9 L378.6 70.1 L383.8 71.4 L378.6 72.7 L379.9 75.9 L376.7 74.6 L375.4 79.8 L374.1 74.6 L370.9 75.9 L372.2 72.7 L367.0 71.4 L372.2 70.1 L370.9 66.9 L374.1 68.2 Z" fill="#ffab00"/>
<!-- ===== Automated modeling (fork) ===== -->
<path d="M401.6 68.6 Q405.6 72.6 409.8 72.8 Q414.6 73 418.8 71 L420.4 73.4 Q415.6 75.6 413.6 80 Q412.4 83 412.6 85.4 L406.2 85.4 Q406.6 82 405.6 79 Q404 73.6 399.6 70.2 Z" fill="#5aace4" stroke="#3d8ccc" stroke-width=".9"/>
<path d="M407.9 76 L412.4 75.8 L409.8 81.4 Z" fill="#f2f2f2" stroke="#3d8ccc" stroke-width=".6"/>
<rect x="395.9" y="64" width="5.6" height="5.4" fill="#f6f6f6" stroke="#555" stroke-width="1.2"/>
<rect x="419" y="66.6" width="6.4" height="6.4" fill="#f6f6f6" stroke="#555" stroke-width="1.1" transform="rotate(-32 422.2 69.9)"/>
<circle cx="409.4" cy="89.6" r="5" fill="#5aace4" stroke="#3d8ccc" stroke-width=".9"/>
<circle cx="409.4" cy="89.6" r="3.5" fill="#fafafa" stroke="#666" stroke-width="1.1"/>
<path d="M407.7 89.6 H411.1 M409.4 87.9 V91.3" stroke="#888" stroke-width=".8"/>
<!-- ===== Press Pull ===== -->
<path d="M450.2 94.4 V69.2 L455.9 63.4 H462 L457 69.2 V94.4 Z" fill="#fff"/>
<rect x="450.2" y="69.2" width="6.6" height="25.2" fill="#dcdcdc"/>
<path d="M456 94.4 H450.2 V69.2 L455.9 63.4 H461.5" fill="none" stroke="#555" stroke-width="1.2"/>
<rect x="457.3" y="69.2" width="8.8" height="25.2" fill="#6bb0e4"/>
<path d="M457.3 69.2 L463 63.4 H471.9 L466.1 69.2 Z" fill="#8ccbf9"/>
<path d="M466.1 69.2 L471.9 63.4 V88.5 L466.1 94.4 Z" fill="#4b96cf"/>
<path d="M469.4 78.6 H475" stroke="#fff" stroke-width="3.4"/>
<path d="M469.9 78.6 H476" stroke="#222" stroke-width="1.3"/>
<path d="M479.3 78.6 L474.6 75.7 V81.5 Z" fill="#222"/>
<!-- ===== Fillet ===== -->
<path d="M492.3 94.4 V70.5 L499.3 63.4 H509.1 Q521.5 65 523.7 76 V87.6 L516.6 94.4 Z" fill="#dcdcdc"/>
<path d="M492.3 70.5 L499.3 63.4 H509.1 L504.2 69.6 Z" fill="#fff"/>
<path d="M516.6 83.6 L523.7 77.2 V87.6 L516.6 94.4 Z" fill="#bdbdbd"/>
<path d="M509.1 63.4 Q521.6 65 523.7 76.2 V78 L517.5 83.6 Q516 71.6 504.2 69.6 Z" fill="#6bb0e4"/>
<path d="M504.4 69.6 L499.3 63.4" stroke="#fff" stroke-width="0" fill="none"/>
<path d="M509.3 63.4 H499.3 L492.3 70.5 V94.4 H516.6 L523.7 87.6 V78.4" fill="none" stroke="#555" stroke-width="1.2"/>
<!-- ===== Shell ===== -->
<path d="M535.2 70.5 L542.3 63.4 H566.9 V86.6 L559.1 94.4 H535.2 Z" fill="#dcdcdc"/>
<path d="M535.2 70.5 L542.3 63.4 H566.9 L559.1 70.5 Z" fill="#f6f6f6"/>
<path d="M559.1 70.5 L566.9 63.4 V86.6 L559.1 94.4 Z" fill="#bdbdbd"/>
<path d="M535.2 70.5 L542.3 63.4 H566.9 V86.6 L559.1 94.4 H535.2 Z" fill="none" stroke="#555" stroke-width="1.2"/>
<rect x="538" y="73.6" width="18" height="17.7" fill="#f0f0f0"/>
<path d="M539.2 75.2 H546.7 V83.3 L539.2 90.3 Z" fill="#4b96cf"/>
<path d="M546.7 83.3 H555 V90.6 H539.2 V90.3 Z" fill="#8ccbf9"/>
<!-- ===== Combine ===== -->
<path d="M588.8 67.4 L594.4 63.4 H610.2 L606.1 67.4 Z" fill="#8ccbf9"/>
<path d="M578.2 77.6 L582.6 73.6 H589 V77.6 Z" fill="#8ccbf9"/>
<path d="M588.8 67.4 H606.1 V84.2 H596.3 V94.4 H578.2 V77.6 H588.8 Z" fill="#6bb0e4"/>
<path d="M606.1 67.4 L610.2 63.4 V80.6 L606.1 84.2 Z" fill="#4b96cf"/>
<path d="M596.3 84.2 H600.2 V91 L596.3 94.4 Z" fill="#4b96cf"/>
<!-- ===== Offset face ===== -->
<rect x="623.1" y="69.2" width="22.3" height="9.3" fill="#6bb0e4"/>
<path d="M623.1 69.2 L630 63.2 H651 L645.4 69.2 Z" fill="#8ccbf9"/>
<path d="M645.4 69.2 L651 63.2 V73 L645.4 78.5 Z" fill="#4b96cf"/>
<path d="M621.1 81.4 H645.9 L653 73.6" fill="none" stroke="#1e8fe6" stroke-width="1.3"/>
<rect x="623.1" y="83.3" width="22.3" height="10.2" fill="#dcdcdc"/>
<path d="M645.4 83.3 L651 77.8 V88.2 L645.4 93.5 Z" fill="#bdbdbd"/>
<path d="M623.1 83.6 V93.5 H645.4 L651 88.2 V79" fill="none" stroke="#555" stroke-width="1.1"/>
<!-- ===== Move ===== -->
<path d="M680 68 V90 M669 78.9 H691" stroke="#333" stroke-width="2" fill="none"/>
<path d="M680 63.3 L685 70.9 H675 Z M680 94.5 L685 86.9 H675 Z M664.4 78.9 L672 73.9 V83.9 Z M695.6 78.9 L688 73.9 V83.9 Z" fill="#333"/>
<!-- ===== Insert Derive ===== -->
<path d="M722.3 75 L730.6 67.2 H747.7 V84.6 L739.8 92.4 H722.3 Z" fill="#dcdcdc"/>
<path d="M722.3 75 L730.6 67.2 H747.7 L739.8 75 Z" fill="#f6f6f6"/>
<path d="M739.8 75 L747.7 67.2 V84.6 L739.8 92.4 Z" fill="#bdbdbd"/>
<path d="M735 67.2 H747.7 V80 M722.3 75 V92.4 H733.5 M722.3 75 L724 73.4" fill="none" stroke="#555" stroke-width="1.1"/>
<path d="M718 67.2 H726.4 V63.2 L735.4 69.2 L726.4 75.2 V71.2 H718 Z" fill="#1e8fe6"/>
<g fill="none" stroke="#f2f2f2" stroke-width="4.2"><rect x="-5" y="-2.6" width="9" height="5.2" rx="2.6" transform="translate(739 90.4) rotate(-35)"/><rect x="-4" y="-2.6" width="9" height="5.2" rx="2.6" transform="translate(745.4 85.6) rotate(-35)"/></g>
<g fill="none" stroke="#222" stroke-width="1.7"><rect x="-5" y="-2.6" width="9.6" height="5.2" rx="2.6" transform="translate(739 90.4) rotate(-35)"/><rect x="-4.6" y="-2.6" width="9.6" height="5.2" rx="2.6" transform="translate(745.4 85.6) rotate(-35)"/></g>
<!-- ===== New Component ===== -->
<rect x="761.2" y="82.5" width="12.4" height="11.9" fill="#dcdcdc"/>
<rect x="773.6" y="82.5" width="11.5" height="11.9" fill="#dcdcdc"/>
<path d="M773.6 82.5 L778 79.5 H788.6 L785.1 82.5 Z" fill="#f6f6f6"/>
<path d="M785.1 82.5 L788.6 79.5 V90.6 L785.1 94.4 Z" fill="#bdbdbd"/>
<path d="M761.2 82.5 V94.4 H785.1 L788.6 90.6 V79.5 H778 L773.6 82.5 V94.4 M785.1 94.4 V82.5 H773.6" fill="none" stroke="#555" stroke-width="1.1"/>
<rect x="761.2" y="71.4" width="12.4" height="11.1" fill="#6bb0e4"/>
<path d="M761.2 71.4 L767 67.2 H777 L773.6 71.4 Z" fill="#8ccbf9"/>
<path d="M773.6 71.4 L777 67.2 V78.6 L773.6 82.5 Z" fill="#4b96cf"/>
<path d="M784.5 63.0 L785.8 68.2 L789.0 66.9 L787.7 70.1 L792.9 71.4 L787.7 72.7 L789.0 75.9 L785.8 74.6 L784.5 79.8 L783.2 74.6 L780.0 75.9 L781.3 72.7 L776.1 71.4 L781.3 70.1 L780.0 66.9 L783.2 68.2 Z" fill="#ffab00" stroke="#f2f2f2" stroke-width=".6"/>
<!-- ===== Joint ===== -->
<rect x="804.8" y="81.6" width="13" height="11" fill="none" stroke="#555" stroke-width="1.3"/>
<path d="M819.4 65.2 V92.9" stroke="#d42020" stroke-width="1.3"/>
<rect x="821.3" y="65.5" width="13.6" height="11.1" fill="#6bb0e4" stroke="#5aa3dc" stroke-width=".6"/>
<!-- ===== Table / BOM ===== -->
<rect x="847.1" y="63.1" width="6.7" height="6.5" fill="#6bb0e4" stroke="#4b96cf" stroke-width=".5"/>
<path d="M847.6 70 H859.3 V75.6 H847.6 Z M853.6 70 V75.6" fill="#fff" stroke="#555" stroke-width="1.1"/>
<path d="M852.4 77.1 V92.6 M852.4 80.4 H859.8 M852.4 85.6 H859.8 M852.4 90.6 H859.8" stroke="#8a8a8a" stroke-width="1" fill="none"/>
<rect x="862.7" y="71.4" width="15.6" height="22.8" fill="#fff" stroke="#666" stroke-width="1.1"/>
<rect x="862.2" y="71" width="16.6" height="3.6" fill="#666"/><rect x="863.6" y="72.4" width="1.8" height="1" fill="#fff"/>
<path d="M867.6 74.6 V94 M862.7 79.6 H878.3 M862.7 84.4 H878.3 M862.7 89.4 H878.3" stroke="#666" stroke-width=".9" fill="none"/>
<!-- ===== Configure 1 ===== -->
<path d="M901.3 70.2 L908.5 63.4 H929 V84 L921.9 90.6 H901.3 Z" fill="#dcdcdc"/>
<path d="M901.3 70.2 L908.5 63.4 H929 L921.9 70.2 Z" fill="#f6f6f6"/>
<path d="M921.9 70.2 L929 63.4 V84 L921.9 90.6 Z" fill="#bdbdbd"/>
<path d="M917.5 90.6 H901.3 V70.2 L908.5 63.4 H929 V82" fill="none" stroke="#555" stroke-width="1.2"/>
<g id="sliders"><path d="M918.6 83 H934 V94.9 H918.6 Z" fill="#f2f2f2"/><path d="M919.2 86 H933 M919.2 91.8 H933" stroke="#555" stroke-width="1.8"/><rect x="921.9" y="83.2" width="2.2" height="5.5" fill="#1e8fe6"/><rect x="928" y="89.1" width="2.2" height="5.4" fill="#555"/></g>
<!-- ===== Configure 2 ===== -->
<rect x="944.8" y="63.6" width="28.4" height="28" fill="#fff" stroke="#666" stroke-width="1.2"/>
<rect x="944.2" y="63.1" width="29.6" height="5.5" fill="#666"/><rect x="946.4" y="65" width="3.6" height="1.8" fill="#fff"/>
<path d="M947.8 72.6 H970.2 V87.4 H947.8 Z M947.8 77.6 H970.2 M947.8 82.5 H970.2 M952.6 72.6 V87.4 M957.4 72.6 V87.4" fill="none" stroke="#666" stroke-width="1"/>
<use href="#sliders" x="43" y="0"/>
<!-- ===== Construct ===== -->
<path d="M1022.2 93.5 V71.4 L1030.8 63.4 H1038.8 L1030.4 71.4 V93.5 Z" fill="#fff"/>
<rect x="1022.2" y="71.4" width="8" height="22.1" fill="#dcdcdc"/>
<path d="M1030 93.5 H1022.2 V71.4 L1030.8 63.4 H1038.8" fill="none" stroke="#555" stroke-width="1.2"/>
<path d="M1031.1 72.3 L1039.7 63.4 V85.1 L1031.1 93.5 Z" fill="#5cc87f" stroke="#45b56c" stroke-width=".7"/>
<path d="M1043.2 72.3 L1051.9 63.4 V84.7 L1043.2 93.5 Z" fill="#e8a06a" stroke="#d98a52" stroke-width=".7"/>
<!-- ===== Inspect ===== -->
<path d="M1112.4 71.1 V79.8 M1139.6 71.1 V79.8" stroke="#666" stroke-width="1.4"/>
<path d="M1116 75.5 H1136" stroke="#666" stroke-width="1.2"/>
<path d="M1113.6 75.5 L1117.2 73.3 V77.7 Z M1138.4 75.5 L1134.8 73.3 V77.7 Z" fill="#666"/>
<rect x="1112" y="81" width="28" height="5.7" fill="#ffaa00"/>
<path d="M1114 81 V83 M1117 81 V83.6 M1120 81 V83 M1123 81 V83.6 M1126 81 V83 M1129 81 V83.6 M1132 81 V83 M1135 81 V83.6 M1138 81 V83" stroke="#7a5a10" stroke-width=".9"/>
<!-- ===== Insert Fastener ===== -->
<rect x="1183.9" y="71.6" width="13.7" height="23" rx="1.6" fill="#7bbcee"/>
<path d="M1185 71.8 V94 H1188.6 V71.8 Z" fill="#a6d6fb" opacity=".7"/>
<path d="M1183.9 75.4 H1197.6 M1183.9 77.8 H1197.6 M1183.9 80.2 H1197.6 M1183.9 82.6 H1197.6 M1183.9 85 H1197.6 M1183.9 87.4 H1197.6 M1183.9 89.8 H1197.6 M1183.9 92.2 H1197.6" stroke="#4f98d0" stroke-width=".9" opacity=".8"/>
<path d="M1179.6 64.3 H1202.3 Q1202.9 64.3 1202.9 65 V71.2 Q1202.9 71.8 1202.3 71.8 H1179.6 Q1179 71.8 1179 71.2 V65 Q1179 64.3 1179.6 64.3 Z" fill="#6bb0e4"/>
<path d="M1179 65 H1185 V71.8 H1179.6 Q1179 71.8 1179 71.2 Z" fill="#8ccbf9"/><path d="M1197 65 H1202.9 V71.2 Q1202.9 71.8 1202.3 71.8 H1197 Z" fill="#4b96cf"/>
<path d="M1179 64.3 H1202.9 V65.4 H1179 Z" fill="#9bd3fb"/>
<path d="M1199.2 80.4 H1204.8 V85.2 H1209.6 V90.8 H1204.8 V95.6 H1199.2 V90.8 H1194.4 V85.2 H1199.2 Z" fill="#f2f2f2"/>
<path d="M1200 81.2 H1204 V86 H1208.8 V90 H1204 V94.9 H1200 V90 H1195.2 V86 H1200 Z" fill="#22b14c" stroke="#1a9a40" stroke-width=".7"/>
<!-- ===== Insert image ===== -->
<rect x="1221.4" y="64.4" width="28.2" height="28.2" fill="#8ccbf9" stroke="#4b96cf" stroke-width=".9"/>
<path d="M1221.8 81.6 Q1229.5 70.6 1233.4 78 Q1236.6 84.4 1238.6 85.8 Q1243.8 79.4 1246.4 83.4 L1249.2 86.6 V92.2 H1221.8 Z" fill="#3f8fcc"/>
<circle cx="1241.9" cy="71.8" r="3" fill="#ffffd6"/>
<!-- ===== Select ===== -->
<rect x="1280.2" y="59.1" width="39.5" height="39.6" rx="1.6" fill="#0696d7"/>
<rect x="1284.7" y="63.9" width="26.6" height="20.4" fill="none" stroke="#8ff08f" stroke-width="1" stroke-dasharray="4 2.1"/>
<path d="M1305.2 77.2 L1305.2 91.2 L1308.4 88.4 L1310.6 94.4 L1313.2 93.4 L1310.9 87.6 L1315.4 87.4 Z" fill="#fff"/>
<!-- dropdown arrows -->
<g fill="#222">
<path d="M86.8 75 H93 L89.9 79.1 Z"/>
<path d="M299 105.3 H304.6 L301.8 108.8 Z"/>
<path d="M588.6 105.3 H594.2 L591.4 108.8 Z"/>
<path d="M823 105.3 H828.6 L825.8 108.8 Z"/>
<path d="M964.6 105.3 H970.2 L967.4 108.8 Z"/>
<path d="M1067.2 105.3 H1072.8 L1070 108.8 Z"/>
<path d="M1144.2 105.3 H1149.8 L1147 108.8 Z"/>
<path d="M1229 105.3 H1234.6 L1231.8 108.8 Z"/>
<path d="M1317.2 105.3 H1322.8 L1320 108.8 Z"/>
</g>
</g>
<defs>
<linearGradient id="gTri" x1="0" y1="1" x2="1" y2="0"><stop offset="0" stop-color="#2e2e2e"/><stop offset=".55" stop-color="#8a8a8a"/><stop offset="1" stop-color="#e6e6e6"/></linearGradient>
<linearGradient id="gTriO" x1="0" y1="0" x2="1" y2="0"><stop offset="0" stop-color="#cfcfcf"/><stop offset="1" stop-color="#f4f4f4"/></linearGradient>
<linearGradient id="gBody" x1="0" y1="0" x2="1" y2="0"><stop offset="0" stop-color="#f4f5f7"/><stop offset=".45" stop-color="#c4c8d0"/><stop offset="1" stop-color="#f0f1f4"/></linearGradient>
<g id="eye"><path d="M0 0 Q3.6 -4.7 8 -4.7 Q12.4 -4.7 16 0 Q12.4 4.7 8 4.7 Q3.6 4.7 0 0 Z" fill="#8b8b8b"/><circle cx="8" cy="0" r="3.1" fill="#f0f0f0"/><circle cx="8" cy="0" r="1.7" fill="#8b8b8b"/></g>
<g id="eyeoff"><path d="M0 0 Q3.6 -4.5 8 -4.5 Q12.4 -4.5 16 0 Q12.4 4.5 8 4.5 Q3.6 4.5 0 0 Z" fill="none" stroke="#9c9c9c" stroke-width=".9"/><circle cx="8" cy="0" r="2.6" fill="none" stroke="#9c9c9c" stroke-width=".9"/><path d="M2 -5.4 L13.2 5.6" stroke="#8a8a8a" stroke-width=".9"/></g>
<path id="folder" d="M0 0 H7.2 L8.2 1.8 H15.8 V12.2 H0 Z M0.6 2.6 H7.4" fill="#8e8e8e"/>
<path id="triF" d="M0 11.4 H11.3 V0 Z" fill="url(#gTri)" stroke="#1c1c1c" stroke-width=".9" stroke-linejoin="round"/>
<path id="triO" d="M0 0 L8.4 6.2 L0 12.5 Z" fill="url(#gTriO)" stroke="#222" stroke-width="1.2" stroke-linejoin="round"/>
</defs>
<!-- panel header icons -->
<path d="M14.2 138 L19.2 134.9 V141.1 Z M9.2 138 L14.2 134.9 V141.1 Z" fill="#2a2a2a"/>
<circle cx="287.5" cy="137.3" r="4.6" fill="#111"/><rect x="284.9" y="136.6" width="5.2" height="1.4" fill="#f2f2f2"/>
<path d="M14.2 945.9 L18.4 943.1 V948.7 Z M10 945.9 L14.2 943.1 V948.7 Z" fill="#333" opacity="0"/>
<circle cx="287.5" cy="946.4" r="4.6" fill="#111"/><rect x="284.9" y="945.7" width="5.2" height="1.4" fill="#f2f2f2"/><rect x="286.8" y="943.8" width="1.4" height="5.2" fill="#f2f2f2"/>
<!-- row 1 -->
<use href="#triF" x="20.8" y="158.8"/>
<use href="#eye" x="42.9" y="165"/>
<g>
<path d="M69.2 161.4 L73 157.8 H83.2 Q83.6 157.8 83.6 158.4 V168.2 L79.6 172.2 H69.6 Q68.8 172.2 68.8 171.4 V162 Z" fill="#e4e6ec" stroke="#2a2d3a" stroke-width="1" stroke-linejoin="round"/>
<path d="M69.4 161.6 L73 158.2 H83.2 L79.6 161.6 Z" fill="#fbfbfd"/>
<path d="M79.8 161.8 L83.2 158.6 V168 L79.8 171.6 Z" fill="#c9ccd6"/>
</g>
<circle cx="285.5" cy="165.3" r="5.9" fill="#fafafa" stroke="#222" stroke-width="1.1"/><circle cx="285.5" cy="165.3" r="2.3" fill="#111"/>
<!-- row 2..4 expanders -->
<use href="#triO" x="40.6" y="183.1"/>
<use href="#triO" x="40.6" y="207.1"/>
<use href="#triO" x="40.6" y="231.1"/>
<!-- gear -->
<g transform="translate(68.7 188.6)" fill="#8a8a8a">
<circle r="5.4"/>
<g><rect x="-1.7" y="-7.5" width="3.4" height="15"/><rect x="-1.7" y="-7.5" width="3.4" height="15" transform="rotate(45)"/><rect x="-1.7" y="-7.5" width="3.4" height="15" transform="rotate(90)"/><rect x="-1.7" y="-7.5" width="3.4" height="15" transform="rotate(135)"/></g>
<circle r="2.6" fill="#f0f0f0"/>
</g>
<use href="#folder" x="61.1" y="206.7"/>
<use href="#eyeoff" x="61.1" y="236.9"/>
<use href="#folder" x="86.1" y="230.7"/>
<!-- row 5 -->
<use href="#triF" x="38.8" y="255"/>
<use href="#eye" x="61.1" y="260.9"/>
<use href="#folder" x="86.1" y="254.6"/>
<!-- row 6 -->
<use href="#eye" x="79" y="284.9"/>
<g>
<rect x="104.5" y="277.5" width="15" height="15" rx="3.6" fill="#fcfcfd" stroke="#2a3140" stroke-width="1"/>
<path d="M108.2 283.2 H116 V290.4 Q112 292.4 108.2 290.4 Z" fill="url(#gBody)"/>
</g>
<!-- row 7 -->
<use href="#triF" x="38.8" y="303"/>
<use href="#eye" x="61.1" y="308.9"/>
<use href="#folder" x="86.1" y="302.6"/>
<!-- row 8 -->
<use href="#eyeoff" x="79" y="333"/>
<g>
<path d="M105 326 H118 V336 M105 326 V339.6 H112" fill="none" stroke="#666" stroke-width="1" stroke-dasharray="3.4 1.6"/>
<rect x="104" y="325" width="1.8" height="1.8" fill="#1e7fe0"/><rect x="117.2" y="325" width="1.8" height="1.8" fill="#1e7fe0"/><rect x="104" y="338.8" width="1.8" height="1.8" fill="#1e7fe0"/>
<path d="M112.6 340.4 L113.6 337.6 L117.6 333.4 L119.8 335.4 L115.6 339.6 Z" fill="#f6b740"/>
<path d="M117.6 333.4 L118.6 332.4 Q119.4 332 120 332.8 L120.6 333.6 Q120.8 334.4 119.8 335.4 Z" fill="#ee3030"/>
<path d="M112.6 340.4 L113.2 338.6 L114.4 339.8 Z" fill="#555"/>
</g>
<defs>
<linearGradient id="gLens" x1="0" y1="0" x2="0" y2="1"><stop offset="0" stop-color="#c5dede"/><stop offset="1" stop-color="#eef6f6"/></linearGradient>
<linearGradient id="gGrid" x1="0" y1="0" x2="0" y2="1"><stop offset="0" stop-color="#55585e"/><stop offset="1" stop-color="#8a8e98"/></linearGradient>
<g id="tlExtr"><path d="M0.5 992.5 H10.3 L12.7 990 V992.3 L10.3 994.7 H0.5 Z" fill="#bcbcbc"/><rect x="0.5" y="981.7" width="9.8" height="10.8" fill="#6bb0e4"/><path d="M0.5 981.7 L2.9 979.1 H12.7 L10.3 981.7 Z" fill="#8ccbf9"/><path d="M10.3 981.7 L12.7 979.1 V990 L10.3 992.5 Z" fill="#4b96cf"/><path d="M14.6 981 V992" stroke="#222" stroke-width=".8"/><path d="M14.6 979.2 L15.9 982 H13.3 Z" fill="#222"/></g>
<g id="tlCham"><path d="M0.2 993 V985 L5.3 980.1 H7.6 L13.5 989.4 L9.8 993 Z" fill="#dcdcdc" stroke="#9a9a9a" stroke-width=".7"/><path d="M0.4 985 L5.3 980.3 H7.4 L5.3 983.1 Z" fill="#f6f6f6"/><path d="M5.3 983.1 L9.8 979.8 L13.7 989.2 L9.8 993 Z" fill="#5aa5e0"/><path d="M15.4 988.3 L11.9 981.4" stroke="#222" stroke-width=".8"/><path d="M11.1 979.9 L13.5 981.6 L11.5 982.7 Z" fill="#222"/></g>
<g id="tlFil"><path d="M0.2 994.3 V983.2 L4.2 979.4 H8 Q14.6 980 15.9 987 V990.6 L12.2 994.3 Z" fill="#dcdcdc" stroke="#8e8e8e" stroke-width=".8"/><path d="M0.4 983.2 L4.2 979.6 H8 L6.4 983 Z" fill="#f8f8f8"/><path d="M12.4 989 L15.7 986.4 V990.6 L12.4 994 Z" fill="#b6b6b6"/><path d="M8 979.2 Q14.8 980 15.9 986.2 L12.6 989 Q11.8 983.6 6.2 982.8 Z" fill="#5aa5e0"/></g>
<g id="tlShell"><path d="M0.2 983 L4 979.3 H16 V990.8 L12.3 994.6 H0.2 Z" fill="#dcdcdc" stroke="#8e8e8e" stroke-width=".8"/><path d="M0.5 983 L4.1 979.6 H15.7 L12.3 983 Z" fill="#f8f8f8"/><path d="M12.5 983.2 L15.7 980 V990.7 L12.5 994.2 Z" fill="#b6b6b6"/><rect x="1.7" y="984.4" width="9.4" height="9" fill="#f2f2f2"/><path d="M2.4 985.1 H5.6 V989.6 L2.4 992.6 Z" fill="#3f8fcc"/><path d="M5.6 989.6 H10.4 V992.9 H2.4 V992.6 Z" fill="#8ccbf9"/></g>
</defs>
<g stroke-linejoin="round">
<ellipse cx="852.9" cy="946" rx="7.4" ry="3" fill="none" stroke="#222" stroke-width="1.1"/>
<path d="M848.8 947.4 H856.9 V950 H848.8 Z" fill="#f2f2f2"/>
<path d="M846.3 948.4 L850.4 945.9 V950.9 Z" fill="#111"/><path d="M849.6 948.6 H852" stroke="#111" stroke-width="1.1"/>
<path d="M853.4 936.9 L856 940.4 H854.4 V952.6 H852.4 V940.4 H850.8 Z" fill="#fff" stroke="#333" stroke-width=".9"/>
<path d="M857.4 943.4 Q859.8 944.2 860.3 946" fill="none" stroke="#222" stroke-width="1.1"/>
<rect x="878.5" y="942.3" width="15" height="10" fill="#f4f4f6" stroke="#3a3f4a" stroke-width="1.1"/>
<rect x="881.5" y="945.6" width="9" height="3.6" fill="#a9b2c6" stroke="#2a2f3a" stroke-width="1"/>
<path d="M879.4 941.9 L883.4 937.3 L884.4 938.9 L890.6 937.6 L890.6 941.9 Z" fill="#a9b2c6" stroke="#555" stroke-width=".7"/>
<path d="M905 945.4 Q904.2 944.2 905.6 943.9 Q906.8 943.8 907.8 945.2 L909 947 L907.6 939.6 Q907.5 938.4 908.5 938.3 Q909.4 938.3 909.8 939.4 L911 943.6 L910.8 938 Q910.9 937 911.9 937 Q912.9 937 913.1 938 L913.7 943.4 L914.6 938.7 Q914.9 937.8 915.8 937.9 Q916.7 938.1 916.6 939.2 L916.3 944.4 L918 941.3 Q918.6 940.5 919.4 940.9 Q920.1 941.4 919.8 942.4 L917.6 948.6 Q917 951.4 915.6 952.6 H909.8 Q908.4 951.6 907.6 950 Z" fill="#f0f1f6" stroke="#222" stroke-width="1"/>
<path d="M938 947.2 L941.6 951" stroke="#2a2d35" stroke-width="2.4" stroke-linecap="round"/>
<circle cx="934.9" cy="943.9" r="4.6" fill="url(#gLens)" stroke="#222" stroke-width="1.1"/>
<path d="M941.4 939.8 H945.8 M943.6 937.6 V942 M941.4 943.7 H945.8" stroke="#222" stroke-width=".9"/>
<rect x="956.4" y="937.4" width="15.4" height="15" fill="none" stroke="#222" stroke-width="1" stroke-dasharray="2.6 2"/>
<path d="M966.8 948 L971 952" stroke="#2a2d35" stroke-width="2.8" stroke-linecap="round"/>
<circle cx="962.5" cy="943.6" r="6" fill="url(#gLens)" stroke="#222" stroke-width="1.2"/>
<rect x="989.6" y="937.5" width="15" height="12" rx="1.2" fill="#fafafa" stroke="#444" stroke-width="1"/>
<rect x="991.5" y="939.6" width="11.2" height="7.8" rx=".8" fill="#a4bfe6" stroke="#1f3a7a" stroke-width="1"/>
<path d="M995 949.6 H999.2 L1000.6 952.4 H993.6 Z" fill="#fafafa" stroke="#444" stroke-width=".8"/>
<rect x="1020.4" y="937.4" width="15.2" height="15.2" rx="1" fill="url(#gGrid)" stroke="#44474d" stroke-width=".8"/>
<rect x="1021.6" y="938.6" width="1.7" height="1.7" fill="#fff" opacity="1.00"/>
<rect x="1024.5" y="938.6" width="1.7" height="1.7" fill="#fff" opacity="1.00"/>
<rect x="1027.4" y="938.6" width="1.7" height="1.7" fill="#fff" opacity="1.00"/>
<rect x="1030.3" y="938.6" width="1.7" height="1.7" fill="#fff" opacity="1.00"/>
<rect x="1033.2" y="938.6" width="1.7" height="1.7" fill="#fff" opacity="1.00"/>
<rect x="1021.6" y="941.5" width="1.7" height="1.7" fill="#fff" opacity="0.92"/>
<rect x="1024.5" y="941.5" width="1.7" height="1.7" fill="#fff" opacity="0.92"/>
<rect x="1027.4" y="941.5" width="1.7" height="1.7" fill="#fff" opacity="0.92"/>
<rect x="1030.3" y="941.5" width="1.7" height="1.7" fill="#fff" opacity="0.92"/>
<rect x="1033.2" y="941.5" width="1.7" height="1.7" fill="#fff" opacity="0.92"/>
<rect x="1021.6" y="944.4" width="1.7" height="1.7" fill="#fff" opacity="0.84"/>
<rect x="1024.5" y="944.4" width="1.7" height="1.7" fill="#fff" opacity="0.84"/>
<rect x="1027.4" y="944.4" width="1.7" height="1.7" fill="#fff" opacity="0.84"/>
<rect x="1030.3" y="944.4" width="1.7" height="1.7" fill="#fff" opacity="0.84"/>
<rect x="1033.2" y="944.4" width="1.7" height="1.7" fill="#fff" opacity="0.84"/>
<rect x="1021.6" y="947.3" width="1.7" height="1.7" fill="#fff" opacity="0.76"/>
<rect x="1024.5" y="947.3" width="1.7" height="1.7" fill="#fff" opacity="0.76"/>
<rect x="1027.4" y="947.3" width="1.7" height="1.7" fill="#fff" opacity="0.76"/>
<rect x="1030.3" y="947.3" width="1.7" height="1.7" fill="#fff" opacity="0.76"/>
<rect x="1033.2" y="947.3" width="1.7" height="1.7" fill="#fff" opacity="0.76"/>
<rect x="1021.6" y="950.2" width="1.7" height="1.7" fill="#fff" opacity="0.68"/>
<rect x="1024.5" y="950.2" width="1.7" height="1.7" fill="#fff" opacity="0.68"/>
<rect x="1027.4" y="950.2" width="1.7" height="1.7" fill="#fff" opacity="0.68"/>
<rect x="1030.3" y="950.2" width="1.7" height="1.7" fill="#fff" opacity="0.68"/>
<rect x="1033.2" y="950.2" width="1.7" height="1.7" fill="#fff" opacity="0.68"/>
<rect x="1051.4" y="938.7" width="6.6" height="5.4" rx=".8" fill="#a4bfe6" stroke="#1f3a7a" stroke-width="1.1"/><rect x="1053.4" y="940.4000000000001" width="2.6" height="2" fill="#7f9fd6"/>
<rect x="1059" y="938.7" width="6.6" height="5.4" rx=".8" fill="#a4bfe6" stroke="#1f3a7a" stroke-width="1.1"/><rect x="1061" y="940.4000000000001" width="2.6" height="2" fill="#7f9fd6"/>
<rect x="1051.4" y="945.1" width="6.6" height="5.4" rx=".8" fill="#a4bfe6" stroke="#1f3a7a" stroke-width="1.1"/><rect x="1053.4" y="946.8000000000001" width="2.6" height="2" fill="#7f9fd6"/>
<rect x="1059" y="945.1" width="6.6" height="5.4" rx=".8" fill="#a4bfe6" stroke="#1f3a7a" stroke-width="1.1"/><rect x="1061" y="946.8000000000001" width="2.6" height="2" fill="#7f9fd6"/>
<path d="M866.5 943.2 H872.4 L869.45 946.7 Z" fill="#222"/>
<path d="M977.1 943.2 H983.0 L980.0500000000001 946.7 Z" fill="#222"/>
<path d="M1007.2 943.2 H1013.1 L1010.1500000000001 946.7 Z" fill="#222"/>
<path d="M1038.1 943.2 H1044.0 L1041.05 946.7 Z" fill="#222"/>
<path d="M1068.9 943.2 H1074.8000000000002 L1071.8500000000001 946.7 Z" fill="#222"/>
</g>
<g fill="#5e5e5e">
<rect x="10.9" y="982.2" width="1.9" height="11.7"/><path d="M21.9 982.4 V993.8 L13.3 988.1 Z"/>
<path d="M35.6 988.1 L45 982.2 V994 Z"/><rect x="46.2" y="985.8" width="1.8" height="5"/>
<path d="M61 980.4 V995 L73 987.7 Z"/>
<rect x="84.9" y="985.8" width="1.9" height="5"/><path d="M88.1 982.2 V994 L97.8 988.1 Z"/>
<path d="M111 982.4 V993.8 L119.9 988.1 Z"/><rect x="120.1" y="982.2" width="1.9" height="11.7"/>
</g>
<path d="M154.5 1003.9 H466.6" stroke="#c2c2c2" stroke-width="2.1"/>
<path d="M154.5 998.1 V1004M178.5 998.1 V1004M202.5 998.1 V1004M226.5 998.1 V1004M250.5 998.1 V1004M274.5 998.1 V1004M298.5 998.1 V1004M322.5 998.1 V1004M346.5 998.1 V1004M370.5 998.1 V1004M394.5 998.1 V1004M418.5 998.1 V1004M442.5 998.1 V1004M466.5 998.1 V1004" stroke="#c2c2c2" stroke-width="1.7"/>
<g><path d="M146.6 979.6 H160.2 V988 M146.6 979.6 V993.2 H154" fill="none" stroke="#c4c4c4" stroke-width="1"/>
<path d="M150 983.4 H156.6 Q156 989.6 150 989.8 Z" fill="none" stroke="#777" stroke-width=".8" stroke-dasharray="2.4 1.2"/>
<rect x="146" y="979" width="1.3" height="1.3" fill="#2a8cf0"/>
<rect x="159.6" y="979" width="1.3" height="1.3" fill="#2a8cf0"/>
<rect x="146" y="992.6" width="1.3" height="1.3" fill="#2a8cf0"/>
<rect x="149.4" y="982.8" width="1.3" height="1.3" fill="#2a8cf0"/>
<rect x="156" y="982.8" width="1.3" height="1.3" fill="#2a8cf0"/>
<rect x="149.4" y="989.2" width="1.3" height="1.3" fill="#2a8cf0"/>
<path d="M154.4 994.4 L155.2 992 L159.2 988 L161.2 990 L157.2 994 Z" fill="#f6b740"/><path d="M159.2 988 L160.2 987 Q161 986.6 161.6 987.4 L162 988 Q162.2 988.8 161.2 990 Z" fill="#ee3030"/><path d="M154.2 994.6 L154.9 992.8 L156 993.9 Z" fill="#555"/></g>
<use href="#tlExtr" x="170.0" y="0"/>
<use href="#tlCham" x="194.2" y="0"/>
<use href="#tlCham" x="218.2" y="0"/>
<use href="#tlCham" x="242.2" y="0"/>
<use href="#tlCham" x="266.2" y="0"/>
<use href="#tlExtr" x="290.0" y="0"/>
<use href="#tlShell" x="313.9" y="0"/>
<use href="#tlExtr" x="338.0" y="0"/>
<use href="#tlCham" x="362.2" y="0"/>
<use href="#tlFil" x="386.0" y="0"/>
<use href="#tlFil" x="410.0" y="0"/>
<use href="#tlFil" x="434.0" y="0"/>
<use href="#tlFil" x="458.0" y="0"/>
<path d="M472.1 973.3 H484 V978.4 L478.9 982.4 V1004.8 H477.2 V982.4 L472.1 978.4 Z" fill="#555"/>
<g transform="translate(1898.5 987.5)" fill="#7e7e7e"><circle r="5.5"/><rect x="-1.7" y="-7.5" width="3.4" height="15"/><rect x="-1.7" y="-7.5" width="3.4" height="15" transform="rotate(45)"/><rect x="-1.7" y="-7.5" width="3.4" height="15" transform="rotate(90)"/><rect x="-1.7" y="-7.5" width="3.4" height="15" transform="rotate(135)"/><circle r="2.6" fill="#f2f2f2"/></g>
<path d="M1899.6 938.9 A7.5 7.5 0 1 0 1899.6 953.9 H1907.1 V946.4 A7.5 7.5 0 0 0 1899.6 938.9 Z" fill="#000"/>
<path d="M1894.4 948.6 L1904.4 943 M1895.4 946.2 L1904 941.4 M1897 950 L1905 945.4 M1898 943.4 L1902.4 949 M1900.6 942 L1904.8 947.4" stroke="#e6e6e6" stroke-width="1.05" fill="none"/></svg>
</body></html>
